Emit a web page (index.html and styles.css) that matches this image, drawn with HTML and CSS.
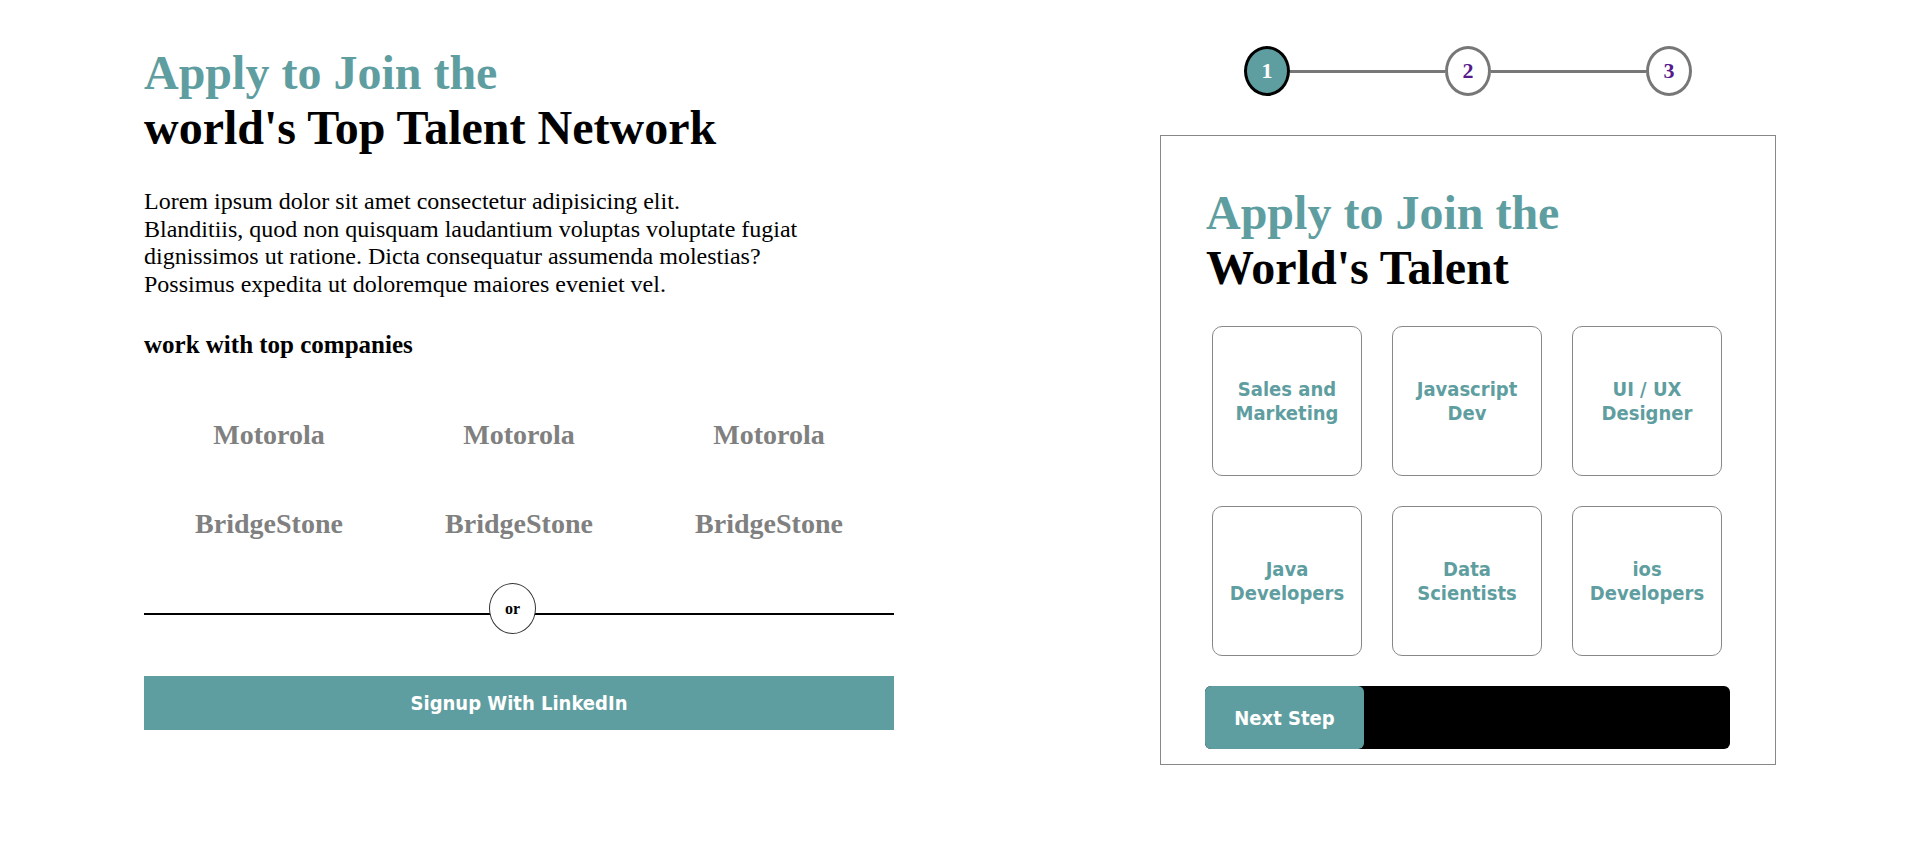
FILE: index.html
```html
<!DOCTYPE html>
<html lang="en">
<head>
<meta charset="utf-8">
<title>Apply to Join the world's Top Talent Network</title>
<link rel="stylesheet" href="styles.css">
</head>
<body>
<main class="page">
  <section class="intro">
    <h1 class="title"><span class="accent">Apply to Join the</span><br>world's Top Talent Network</h1>
    <p class="lead">Lorem ipsum dolor sit amet consectetur adipisicing elit.<br>Blanditiis, quod non quisquam laudantium voluptas voluptate fugiat dignissimos ut ratione. Dicta consequatur assumenda molestias? Possimus expedita ut doloremque maiores eveniet vel.</p>
    <h3 class="companies-title">work with top companies</h3>
    <ul class="logos">
      <li>Motorola</li>
      <li>Motorola</li>
      <li>Motorola</li>
      <li>BridgeStone</li>
      <li>BridgeStone</li>
      <li>BridgeStone</li>
    </ul>
    <div class="divider"><span class="or">or</span></div>
    <button class="linkedin" type="button">Signup With LinkedIn</button>
  </section>

  <section class="apply">
    <div class="stepper">
      <div class="step step-active">1</div>
      <div class="connector"></div>
      <div class="step">2</div>
      <div class="connector"></div>
      <div class="step">3</div>
    </div>
    <div class="card">
      <h1 class="title"><span class="accent">Apply to Join the</span><br>World's Talent</h1>
      <div class="roles">
        <div class="role">Sales and Marketing</div>
        <div class="role">Javascript Dev</div>
        <div class="role">UI / UX Designer</div>
        <div class="role">Java Developers</div>
        <div class="role">Data Scientists</div>
        <div class="role">ios Developers</div>
      </div>
      <div class="next-bar">
        <button class="next-btn" type="button">Next Step</button>
      </div>
    </div>
  </section>
</main>
</body>
</html>
```

FILE: styles.css
```css
html, body {
  margin: 0;
  padding: 0;
  background: #fff;
}

body {
  font-family: "Liberation Serif", "Times New Roman", serif;
  color: #000;
}

.page {
  display: flex;
  align-items: flex-start;
  padding-left: 144px;
}

.intro {
  width: 750px;
  padding-top: 45px;
}

.title {
  margin: 0;
  font-size: 48px;
  line-height: 55px;
  font-weight: bold;
}

.accent {
  color: #5f9ea0;
}

.lead {
  max-width: 690px;
  margin: 33px 0 0;
  font-size: 24px;
  line-height: 27.6px;
}

.companies-title {
  margin: 32px 0 0;
  font-size: 25px;
  line-height: 29px;
  font-weight: bold;
}

.logos {
  margin: 60px 0 0;
  padding: 0;
  list-style: none;
  display: grid;
  grid-template-columns: repeat(3, 250px);
  row-gap: 57px;
  font-size: 28px;
  line-height: 32px;
  font-weight: bold;
  color: #808080;
  text-align: center;
}

.divider {
  position: relative;
  margin-top: 73px;
  height: 2px;
  background: #000;
}

.or {
  position: absolute;
  left: 345px;
  top: -30px;
  width: 45px;
  height: 49px;
  border: 1px solid #333;
  border-radius: 50%;
  background: #fff;
  display: flex;
  align-items: center;
  justify-content: center;
  font-size: 16px;
  font-weight: bold;
}

.linkedin {
  display: block;
  width: 100%;
  height: 54px;
  margin-top: 61px;
  border: 0;
  background: #5f9ea0;
  color: #fff;
  font-family: "DejaVu Sans Condensed", "DejaVu Sans", sans-serif;
  font-stretch: condensed;
  font-weight: bold;
  font-size: 20px;
  padding: 0;
}

.apply {
  margin-left: 266px;
  width: 616px;
  padding-top: 46px;
}

.stepper {
  display: flex;
  align-items: center;
  justify-content: center;
}

.step {
  width: 40px;
  height: 44px;
  border: 3px solid #777;
  border-radius: 50%;
  background: #fff;
  display: flex;
  align-items: center;
  justify-content: center;
  font-size: 22px;
  font-weight: bold;
  color: #551a8b;
}

.step-active {
  background: #5f9ea0;
  border-color: #000;
  color: #fff;
}

.connector {
  width: 155px;
  height: 3px;
  background: #777;
}

.card {
  box-sizing: border-box;
  width: 616px;
  margin-top: 39px;
  border: 1px solid #888;
  padding: 49px 45px 15px;
}

.roles {
  display: grid;
  grid-template-columns: repeat(3, 150px);
  gap: 30px;
  margin: 31px 0 0 6px;
}

.role {
  box-sizing: border-box;
  height: 150px;
  padding: 10px;
  border: 1px solid #888;
  border-radius: 10px;
  display: flex;
  align-items: center;
  justify-content: center;
  text-align: center;
  color: #5f9ea0;
  font-family: "DejaVu Sans Condensed", "DejaVu Sans", sans-serif;
  font-stretch: condensed;
  font-weight: bold;
  font-size: 20px;
  line-height: 24px;
}

.next-bar {
  margin-top: 30px;
  margin-left: -1px;
  height: 63px;
  background: #000;
  border-radius: 6px;
  display: flex;
}

.next-btn {
  width: 159px;
  height: 100%;
  padding: 0;
  border: 0;
  border-radius: 6px;
  background: #5f9ea0;
  color: #fff;
  font-family: "DejaVu Sans Condensed", "DejaVu Sans", sans-serif;
  font-stretch: condensed;
  font-weight: bold;
  font-size: 20px;
}
```
